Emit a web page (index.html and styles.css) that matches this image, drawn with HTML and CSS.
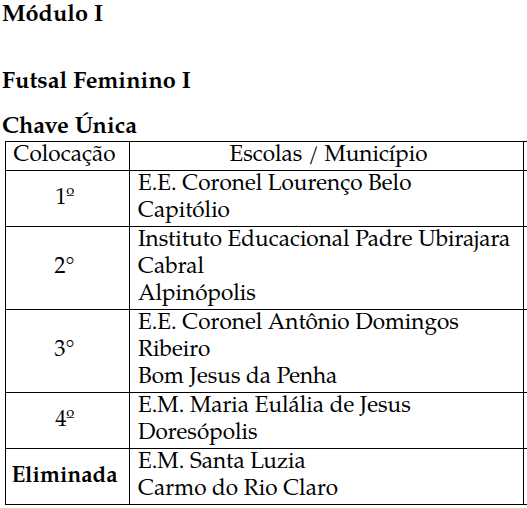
FILE: index.html
```html
<!DOCTYPE html>
<html lang="pt">
<head>
<meta charset="utf-8">
<link rel="stylesheet" href="styles.css">
</head>
<body>
<div class="page">
  <p class="h h-mod">Módulo I</p>
  <p class="h h-sport">Futsal Feminino I</p>
  <p class="h h-key">Chave Única</p>
  <table class="tbl">
    <colgroup><col class="c1"><col class="c2"><col class="c3"></colgroup>
    <tr><td class="pos">Colocação</td><td class="center">Escolas / Município</td><td></td></tr>
    <tr><td class="pos">1º</td><td>E.E. Coronel Lourenço Belo<br>Capitólio</td><td></td></tr>
    <tr><td class="pos">2°</td><td>Instituto Educacional Padre Ubirajara<br>Cabral<br>Alpinópolis</td><td></td></tr>
    <tr><td class="pos">3°</td><td>E.E. Coronel Antônio Domingos<br>Ribeiro<br>Bom Jesus da Penha</td><td></td></tr>
    <tr><td class="pos">4º</td><td>E.M. Maria Eulália de Jesus<br>Doresópolis</td><td></td></tr>
    <tr><td class="pos bold">Eliminada</td><td>E.M. Santa Luzia<br>Carmo do Rio Claro</td><td></td></tr>
  </table>
</div>
</body>
</html>
```
FILE: styles.css
```css
html, body { margin: 0; padding: 0; background: #fff; overflow: hidden; }
body { font-family: "TeX Gyre Pagella", "Liberation Serif", serif; font-size: 22.5px; color: #000; }
.page { padding: 2px 0 0 2px; width: 700px; }
.h { font-weight: bold; font-size: 23.5px; margin: 0; line-height: 27px; }
.h-sport { margin-top: 40px; }
.h-key { margin-top: 18px; }
.tbl { border-collapse: collapse; table-layout: fixed; width: 650px; margin-left: 3px; }
.c1 { width: 124px; }
.c2 { width: 394px; }
.tbl td { border: 1px solid #000; padding: 1px 4px 0 8px; line-height: 27px; vertical-align: top; white-space: nowrap; }
.tbl .pos { text-align: center; vertical-align: middle; padding: 1px 8px 0 2px; }
.tbl .center { text-align: center; }
.bold { font-weight: bold; }
```
